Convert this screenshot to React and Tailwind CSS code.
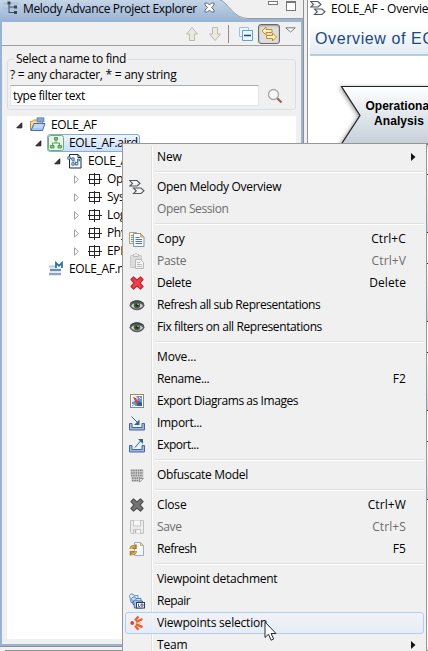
import React from 'react';

const Svg = ({ children, className = 'w-4 h-4', box = '0 0 16 16' }) => (
  <svg viewBox={box} className={`shrink-0 ${className}`} fill="none">
    {children}
  </svg>
);

const Chevrons = () => (
  <Svg>
    <path d="M.8 1.500H8l3 3-3 2.500H.8l2.700-2.500z" fill="#f4f5f6" stroke="#50555b" strokeWidth="1.100" />
    <path d="M4.500 9H12l3 2.800-3 2.700H4.500l2.700-2.700z" fill="#f4f5f6" stroke="#50555b" strokeWidth="1.100" />
  </Svg>
);

const CopyIcon = () => (
  <Svg>
    <path d="M.5 1.500h7l2 2v9h-9z" fill="#f3f5f8" stroke="#c2a35b" />
    <path d="M2 4.500h3M2 6.500h3M2 8.500h3M2 10.500h3" stroke="#6b8ec4" />
    <path d="M4.500 2.500h7l3.500 3.500v9.500H4.500z" fill="#f8fafe" stroke="#8294b4" />
    <path d="M11.500 2.500V6h3.500z" fill="#e8c35a" stroke="#b3913e" strokeWidth=".6" />
    <path d="M6.500 6.500h4M6.500 8.500h6.500M6.500 10.500h6.500M6.500 12.500h6.500" stroke="#4d76b5" />
  </Svg>
);

const PasteIcon = () => (
  <Svg>
    <rect x="1.500" y="2.500" width="11" height="12" rx="1" fill="#dcdcdc" stroke="#c6c6c6" />
    <path d="M4.500 3.500v-2h1l1-1h1l1 1h1v2z" fill="#eee" stroke="#bbb" />
    <path d="M6.500 6.500h5l3 3v6h-8z" fill="#f3f3f3" stroke="#b9b9b9" />
    <path d="M8 9.500h3M8 11.500h5M8 13.500h5" stroke="#bcbcbc" />
  </Svg>
);

const CrossIcon = ({ fill, stroke }) => (
  <Svg>
    <path d="M2 4.500 4.500 2 8 5l3.500-3L14 4.500 11 8l3 3.500-2.500 2.500L8 11l-3.500 3L2 11.500 5 8z" fill={fill} stroke={stroke} strokeWidth="1.200" strokeLinejoin="round" />
  </Svg>
);

const EyeIcon = () => (
  <Svg>
    <path d="M.3 8.500C2 4.500 5 3.200 8 3.200s6 1.300 7.700 5.300C13.500 12 11 13.200 8 13.200S2.500 12 .3 8.500z" fill="#555a5c" />
    <path d="M2 8.800C4 6.300 6 6 8 6s4 .3 6 2.800C12 11 10 11.700 8 11.700S4 11 2 8.800z" fill="#cfd3d1" />
    <circle cx="8" cy="8.300" r="3.200" fill="#4b5d49" />
    <circle cx="8" cy="8.300" r="1.400" fill="#1f2b22" />
    <circle cx="9" cy="7.200" r=".8" fill="#b9d79c" />
    <path d="M1 6.500C4 3.500 11 3 15 6.500" stroke="#34393b" />
  </Svg>
);

const ImageIcon = () => (
  <Svg>
    <rect x="1.500" y="1.500" width="13" height="13" fill="#fff" stroke="#9c8b5c" />
    <path d="M1.500 8v6.500h13V8" stroke="#7589a8" />
    <rect x="3" y="3" width="10" height="10" fill="#6c94cf" />
    <path d="M3 3h4l2 3-3 2-3 1z" fill="#e9eff5" />
    <path d="M4 4l3 1 2 4-1.500 3-1.500-4z" fill="#cf4a35" />
    <path d="M9 8l4 2v3H8z" fill="#3b5682" />
    <path d="M10 4l2 2M3 11.500l3 1" stroke="#fff" />
  </Svg>
);

const Tray = ({ out }) => (
  <Svg>
    <path d="M.5 8.500H3v4h10v-4h2.500v6.500H.5z" fill="#9db7e2" stroke="#48669f" />
    {out ? (
      <>
        <path d="M6 10.500l6-7" stroke="#266a92" />
        <path d="M9 2h5v5z" fill="#266a92" />
      </>
    ) : (
      <>
        <path d="M2.500 1.500l6 6" stroke="#266a92" />
        <path d="M10.500 4.500v5.500H5z" fill="#266a92" />
      </>
    )}
  </Svg>
);

const ObfuscateIcon = () => (
  <Svg>
    <path d="M1 2h13.500v9.500L11 15H2.500z" fill="#d4d4d4" />
    <path d="M2 3.500h12M2 6h12M2 8.500h12M3 11h10M3 13.500h7" stroke="#7c7c7c" strokeDasharray="1.500 .8" strokeWidth="1.400" />
    <path d="M10.500 15v-3.500h4z" fill="#f2f2f2" stroke="#888" strokeWidth=".8" />
  </Svg>
);

const SaveIcon = () => (
  <Svg>
    <path d="M1.500 1.500h13v13h-12l-1-1z" fill="#ececec" stroke="#c0c0c0" />
    <path d="M4.500 1.500v5.500h7V1.500M4.500 14.500v-4h7v4" fill="#f6f6f6" stroke="#c4c4c4" />
    <path d="M6.500 11v3" stroke="#b4b4b4" strokeWidth="1.500" />
  </Svg>
);

const RefreshIcon = () => (
  <Svg>
    <path d="M5.500 1.500h6l3 3v10h-9z" fill="#f4f8fe" stroke="#9aadcb" />
    <path d="M11.500 1.500v3h3z" fill="#e7cf8e" stroke="#c1a45b" strokeWidth=".7" />
    <path d="M1.500 8c0-3 2.500-3.500 4-2.500M6.800 3.500v3.500h-3.500M7 10c0 3-2.500 3.500-4 2.500M1.700 14.500V11h3.500" stroke="#b27d18" strokeWidth="1.900" />
    <path d="M1.800 7.500c.2-2 2.500-2.500 4-1.200M6.800 10.500c-.2 2-2.500 2.500-4 1.200" stroke="#f5d373" strokeWidth=".9" />
  </Svg>
);

const RepairIcon = () => (
  <Svg>
    <path d="M.5 2.500 2 1h2l1 1.500h4v7H2z" fill="#e4effb" stroke="#5e85bf" strokeWidth=".9" />
    <path d="M2.500 5.500 4 4h2l1 1.500h5v6H4z" fill="#cfe0f6" stroke="#4874b4" strokeWidth=".9" />
    <path d="M4.500 8l1-1h2l1 1h5v7h-8z" fill="#a9c6ec" stroke="#365f9f" strokeWidth=".9" />
    <rect x="7.500" y="9.500" width="8" height="5.500" fill="#fff" stroke="#303d59" />
    <path d="M9.500 10.800v2.700h1.500M12 11h2v2.200h-2z" stroke="#303d59" strokeWidth=".8" />
  </Svg>
);

const ViewpointIcon = () => (
  <Svg>
    <circle cx="3.200" cy="8" r="1.900" fill="#e04420" />
    <path d="M6 5.500 9.500 1.500M7 7l6.500-3M7 9.200l6.500 3M6 10.800l3.500 4" stroke="#ee6034" strokeWidth="2.400" />
    <path d="M7.500 8.100h4.500" stroke="#f5a27f" strokeWidth=".9" />
  </Svg>
);

const menu = [
  { t: 'New', arrow: true },
  null,
  { t: 'Open Melody Overview', icon: <Chevrons />, tr: 'tracking-[-0.3px]' },
  { t: 'Open Session', off: true, tr: 'tracking-[-0.4px]' },
  null,
  { t: 'Copy', k: 'Ctrl+C', icon: <CopyIcon /> },
  { t: 'Paste', k: 'Ctrl+V', off: true, icon: <PasteIcon />, tr: 'tracking-[-0.3px]' },
  { t: 'Delete', k: 'Delete', icon: <CrossIcon fill="#e8414b" stroke="#c32730" />, tr: 'tracking-[-0.3px]' },
  { t: 'Refresh all sub Representations', icon: <EyeIcon />, tr: 'tracking-[-0.44px]' },
  { t: 'Fix filters on all Representations', icon: <EyeIcon />, tr: 'tracking-[-0.4px]' },
  null,
  { t: 'Move...' },
  { t: 'Rename...', k: 'F2', tr: 'tracking-[-0.35px]' },
  { t: 'Export Diagrams as Images', icon: <ImageIcon />, tr: 'tracking-[-0.43px]' },
  { t: 'Import...', icon: <Tray />, tr: 'tracking-[-0.3px]' },
  { t: 'Export...', icon: <Tray out />, tr: 'tracking-[-0.5px]' },
  null,
  { t: 'Obfuscate Model', icon: <ObfuscateIcon />, tr: 'tracking-[-0.3px]' },
  null,
  { t: 'Close', k: 'Ctrl+W', icon: <CrossIcon fill="#757575" stroke="#525252" /> },
  { t: 'Save', k: 'Ctrl+S', off: true, icon: <SaveIcon />, tr: 'tracking-[-0.35px]' },
  { t: 'Refresh', k: 'F5', icon: <RefreshIcon />, tr: 'tracking-[-0.5px]' },
  null,
  { t: 'Viewpoint detachment', tr: 'tracking-[-0.3px]' },
  { t: 'Repair', icon: <RepairIcon />, tr: 'tracking-[-0.5px]' },
  { t: 'Viewpoints selection', hot: true, icon: <ViewpointIcon />, tr: 'tracking-[-0.2px]' },
  { t: 'Team', arrow: true },
];

function MenuItem({ item }) {
  if (!item) {
    return (
      <div className="h-2 pt-[3px] pl-[30px]">
        <div className="h-px bg-[#dfdfdf]" />
        <div className="h-px bg-white" />
      </div>
    );
  }
  return (
    <div
      className={`flex h-[22px] items-center rounded-[3px] border pl-[3px] pr-[17px] ${
        item.hot ? 'border-[#aecff7] bg-linear-to-b from-[#f1f3f7]/80 to-[#e5ebf6]/80' : 'border-transparent'
      } ${item.off ? 'text-[#6d6d6d]' : 'text-black'}`}
    >
      <div className="flex w-[28px] shrink-0 items-center">{item.icon}</div>
      <span className={`flex-1 ${item.tr || ''}`}>{item.t}</span>
      {item.k && <span className="tracking-[0.1px]">{item.k}</span>}
      {item.arrow && (
        <Svg className="mr-[-10px] h-[8px] w-[5px]" box="0 0 5 8">
          <path d="M0 0l4.500 4L0 8z" fill="#111" />
        </Svg>
      )}
    </div>
  );
}

const Open = () => (
  <Svg className="h-[9px] w-[9px]" box="0 0 9 9">
    <path d="M6.800 1.800v5H1.800z" fill="#3c3c3c" stroke="#1e1e1e" strokeLinejoin="round" />
  </Svg>
);

const Closed = () => (
  <Svg className="h-[9px] w-[9px]" box="0 0 9 9">
    <path d="M2.500.8v7.400l4-3.700z" fill="#fff" stroke="#a0a0a0" />
  </Svg>
);

const Folder = () => (
  <Svg className="h-4 w-[17px]" box="0 0 17 16">
    <path d="M1.500 13V4.500h2l1-1.500h4l1 1.500h4V13z" fill="#f5dc92" stroke="#c29436" />
    <path d="M8 .8h7v4H8z" fill="#84a6d8" stroke="#4d74b4" strokeWidth=".7" />
    <path d="M2 13.500 5 6.500h11l-2.500 7z" fill="#a9c8f0" stroke="#3b6fb8" />
    <path d="M5.500 8h9M4.800 10h9" stroke="#dbe9fb" />
  </Svg>
);

const Aird = () => (
  <Svg>
    <rect x=".5" y=".5" width="15" height="15" rx="2" fill="#e8f4e8" stroke="#70ae72" />
    <path d="M8 5v3M4.500 11V8h7v3" stroke="#4c9450" strokeWidth=".9" />
    <path d="M6.500 2.500h3v2.500h-3zM2.500 10.500h3.500v2.500H2.500zM10 10.500h3.500v2.500H10z" fill="#8cc48d" stroke="#4b8e50" strokeWidth=".9" />
  </Svg>
);

const ModelFile = () => (
  <Svg>
    <path d="M2.500 1.500H11l3 3v10.500H2.500z" fill="#fafcfe" stroke="#202830" />
    <path d="M11 1.500v3h3" stroke="#202830" />
    <path d="M2 5l4 1 3 4 3-3M6 6v5l4 1" stroke="#53779b" strokeWidth=".8" />
    <path d="M.8 3.800h2.400v2.400H.8zM4.800 4.800h2.400v2.400H4.800zM4.800 9.800h2.400v2.400H4.800zM8.500 9.500h2.400v2.400H8.500zM10.500 6h2v2h-2z" fill="#cfe2f5" stroke="#2b5c8c" strokeWidth=".8" />
  </Svg>
);

const Grid = () => (
  <Svg>
    <path d="M3.500 3.500h10v9h-10zM8.500 2v12.500M1.500 8.500h14" stroke="#262626" shapeRendering="crispEdges" />
  </Svg>
);

const MelodyFile = () => (
  <Svg>
    <path d="M1 5.500h8" stroke="#b7c8de" strokeWidth="2" />
    <path d="M2 9h11" stroke="#6a8cb8" strokeWidth="2.500" />
    <path d="M1 13h12" stroke="#8ba5ca" strokeWidth="2.500" />
    <path d="M8 7V1.800l3 3 3-3V7" stroke="#286f9f" strokeWidth="1.700" />
  </Svg>
);

const tree = [
  ['pl-[8px]', Open, Folder, 'EOLE_AF'],
  ['pl-[27px]', Open, Aird, 'EOLE_AF.aird'],
  ['pl-[46px]', Open, ModelFile, 'EOLE_AF'],
  ['pl-[65px]', Closed, Grid, 'Operational Analysis'],
  ['pl-[65px]', Closed, Grid, 'System Analysis'],
  ['pl-[65px]', Closed, Grid, 'Logical Architecture'],
  ['pl-[65px]', Closed, Grid, 'Physical Architecture'],
  ['pl-[65px]', Closed, Grid, 'EPBS Architecture'],
  ['pl-[41px]', null, MelodyFile, 'EOLE_AF.melodymodeller'],
];

function Tree() {
  return (
    <div className="mx-[5px] mt-[6px] h-[523px] overflow-hidden bg-white">
      {tree.map(([pad, Tw, Icon, label], i) => (
        <div key={i} className={`flex h-[18px] items-center whitespace-nowrap tracking-[-0.35px] ${pad} gap-[5px]`}>
          {Tw && <Tw />}
          {i === 1 ? (
            <div className="-ml-px flex h-[18px] items-center gap-[5px] rounded-[3px] border border-[#84acdd] bg-linear-to-b from-[#eef5fe] to-[#c9dffb] pr-[1px]">
              <Icon />
              <span>{label}</span>
            </div>
          ) : (
            <>
              <Icon />
              <span>{label}</span>
            </>
          )}
        </div>
      ))}
    </div>
  );
}

const ToolArrow = ({ down }) => (
  <Svg className={`h-4 w-[14px] ${down ? 'rotate-180' : ''}`} box="0 0 14 16">
    <path d="M7 1.500 12.500 8H9.500v6.500h-5V8h-3z" fill="#ebe9e2" stroke="#bcb9b0" strokeLinejoin="round" />
  </Svg>
);

function Explorer() {
  return (
    <div className="flex h-[647px] w-[304px] shrink-0 flex-col border-r border-b border-[#919191] bg-[#f0f0f0]">
      <div className="flex h-[22px] justify-between bg-[#f0f0f0]">
        <div className="flex">
          <div className="flex h-[22px] w-[216px] items-start bg-linear-to-b from-[#c5d5e7] to-[#97b2d3] pl-[3px]">
            <Svg>
              <path d="M0 3.500h16M0 8.500h16M0 13.500h16" stroke="#a9c1df" strokeWidth="2" />
              <path d="M6 2v11M6 7h5M6 12.500h5" stroke="#46505c" />
              <path d="M4.500 1.500h3v3h-3zM11 5.500h3v3h-3zM11 11h3v3h-3z" fill="#3b4450" />
            </Svg>
            <span className="ml-[4px] mt-px w-[181px] whitespace-nowrap tracking-[-0.33px]">Melody Advance Project Explorer</span>
            <Svg className="mt-[2px] h-[11px] w-[11px]" box="0 0 11 11">
              <path d="M1 1h2.500l2 2 2-2H10v2L7.500 5.500 10 8v2H7.500l-2-2-2 2H1V8l2.500-2.500L1 3z" fill="#fff" stroke="#555f6b" strokeWidth=".9" />
            </Svg>
          </div>
          <Svg className="h-[22px] w-[32px]" box="0 0 32 22">
            <defs>
              <linearGradient id="tab" x2="0" y2="1">
                <stop stopColor="#c5d5e7" />
                <stop offset="1" stopColor="#97b2d3" />
              </linearGradient>
            </defs>
            <path d="M0 0h4c8 2 13 19 28 19v3H0z" fill="url(#tab)" />
            <path d="M4 0c8 2 13 18.500 28 18.500" stroke="#929ba6" />
          </Svg>
        </div>
        <div className="flex flex-1 flex-col">
          <div className="flex h-[19px] items-start justify-end gap-[8px] border-b border-[#9a9a9a] pr-[7px] pt-[1px]">
            <div className="h-[4px] w-[10px] border border-[#777] bg-white" />
            <div className="h-[10px] w-[10px] border border-t-2 border-[#777] bg-white" />
          </div>
          <div className="h-[3px] bg-[#9ab4d4]" />
        </div>
      </div>
      <div className="flex-1 border-x-2 border-b-2 border-[#99b4d3]">
        <div className="flex h-[24px] items-center justify-end border-b border-[#a0a0a0] pr-[5px]">
          <ToolArrow />
          <div className="w-[9px]" />
          <ToolArrow down />
          <div className="ml-[6px] mr-[10px] h-[18px] w-px bg-[#8d8d8d]" />
          <Svg className="h-[14px] w-[14px]" box="0 0 14 14">
            <path d="M.5.500h9v9h-9z" fill="#e9f5fc" stroke="#9dc3dc" />
            <path d="M3.500 3.500h10v10h-10z" fill="#eaf7ff" stroke="#69a0c6" />
            <path d="M5 8.500h7" stroke="#174c80" strokeWidth="1.500" />
          </Svg>
          <div className="ml-[5px] flex h-[20px] w-[22px] items-center justify-center rounded-[3px] border border-[#686868] bg-[#dedede] shadow-[inset_0_1px_2px_#999]">
            <Svg>
              <path d="M1 5l4-4v2.500h6v3H5V9z" fill="#fdf0c2" stroke="#c68a1c" />
              <path d="M15.500 11 11.500 7v2.500h-6v3h6V15z" fill="#fdf0c2" stroke="#c68a1c" />
            </Svg>
          </div>
          <Svg className="mb-[7px] ml-[5px] h-[6px] w-[11px]" box="0 0 11 6">
            <path d="M.8.800h9.400L5.500 5z" fill="#fff" stroke="#777" />
          </Svg>
        </div>
        <div className="mx-[5px] mt-[6px] h-[58px]">
          <fieldset className="h-[58px] rounded-[3px] border border-[#d5dfe9] px-[2px]">
            <legend className="ml-[4px] h-[14px] px-[2px] leading-[14px] tracking-[-0.35px]">Select a name to find</legend>
            <div className="mt-[1px] h-[16px] whitespace-nowrap leading-[16px] tracking-[-0.27px]">? = any character, * = any string</div>
            <div className="mt-[2px] flex items-center">
              <div className="flex h-[21px] w-[249px] items-center border border-[#e0e4ea] border-t-[#aaadb3] bg-white pl-[2px] tracking-[-0.4px]">type filter text</div>
              <Svg className="ml-[8px] h-[16px] w-[16px]">
                <path d="M10 10l4.500 4.500" stroke="#946759" strokeWidth="2.300" />
                <circle cx="6.500" cy="6.500" r="5" fill="#f4f8fb" stroke="#aaa79e" strokeWidth="1.300" />
              </Svg>
            </div>
          </fieldset>
        </div>
        <Tree />
      </div>
    </div>
  );
}

function Overview() {
  return (
    <div className="flex h-[647px] flex-1 flex-col overflow-hidden border-l border-[#919191] bg-white pl-[2px]">
      <div className="flex h-[19px] items-start whitespace-nowrap">
        <Chevrons />
        <span className="ml-[5px] mt-px tracking-[-0.2px]">EOLE_AF - Overview</span>
      </div>
      <div className="mt-[6px] h-[31px] shrink-0 border-b-2 border-[#b9cad9] bg-linear-to-b from-white to-[#e2ebf4] pl-[5px] font-['Liberation_Sans',sans-serif] text-[16px] leading-[27px] tracking-[0.6px] whitespace-nowrap text-[#194a7f]">
        Overview of EOLE_AF
      </div>
      <div className="relative mt-[28px] ml-[29px] h-[62px] shrink-0">
        <Svg className="h-[62px] w-[92px] drop-shadow-[-1px_1px_2px_#999]" box="0 0 92 62">
          <defs>
            <linearGradient id="step" x2="0" y2="1">
              <stop stopColor="#fff" />
              <stop offset="1" stopColor="#c5cfda" />
            </linearGradient>
          </defs>
          <path d="M2.500 2.500H110V60H2.500l18.500-28.500z" fill="url(#step)" stroke="#222" strokeWidth="1.200" />
        </Svg>
        <div className="absolute left-[20px] top-[15px] w-[80px] text-center font-['Liberation_Sans',sans-serif] text-[12px] leading-[15px] font-bold tracking-[0.05px]">
          Operational Analysis
        </div>
      </div>
      <div className="flex flex-col items-end gap-[30px] pt-[28px]">
        {[0, 1, 2, 3].map((n) => (
          <div key={n} className="h-[59px] w-[4px] border-y border-[#333] bg-linear-to-b from-white to-[#c8d4e2]" />
        ))}
      </div>
    </div>
  );
}

export default function App() {
  return (
    <div className="relative h-[651px] w-[428px] overflow-hidden bg-[#f0f0f0] font-['Open_Sans','Noto_Sans',sans-serif] text-[12px] leading-[16px] tracking-[-0.15px] text-black">
      <div className="flex gap-[3px]">
        <Explorer />
        <Overview />
      </div>
      <div className="mt-[3px] ml-[5px] h-px bg-[#929292]" />
      <div className="absolute left-[122px] top-[143px] h-[520px] w-[305px] border border-[#979797] bg-[#f0f0f0] p-[2px]">
        <div className="absolute left-[28px] top-[2px] bottom-0 flex w-[2px]">
          <div className="w-px bg-[#e0e0e0]" />
          <div className="w-px bg-white" />
        </div>
        <div className="relative whitespace-nowrap">
          {menu.map((item, i) => (
            <MenuItem key={i} item={item} />
          ))}
        </div>
      </div>
      <svg className="absolute left-[264px] top-[621px] h-[21px] w-[13px]" viewBox="0 0 13 21" fill="none">
        <path d="M1 1v15.500l3.500-3.300 2.600 6 2.600-1.200-2.600-5.500H12z" fill="#fff" stroke="#20283a" />
      </svg>
    </div>
  );
}
